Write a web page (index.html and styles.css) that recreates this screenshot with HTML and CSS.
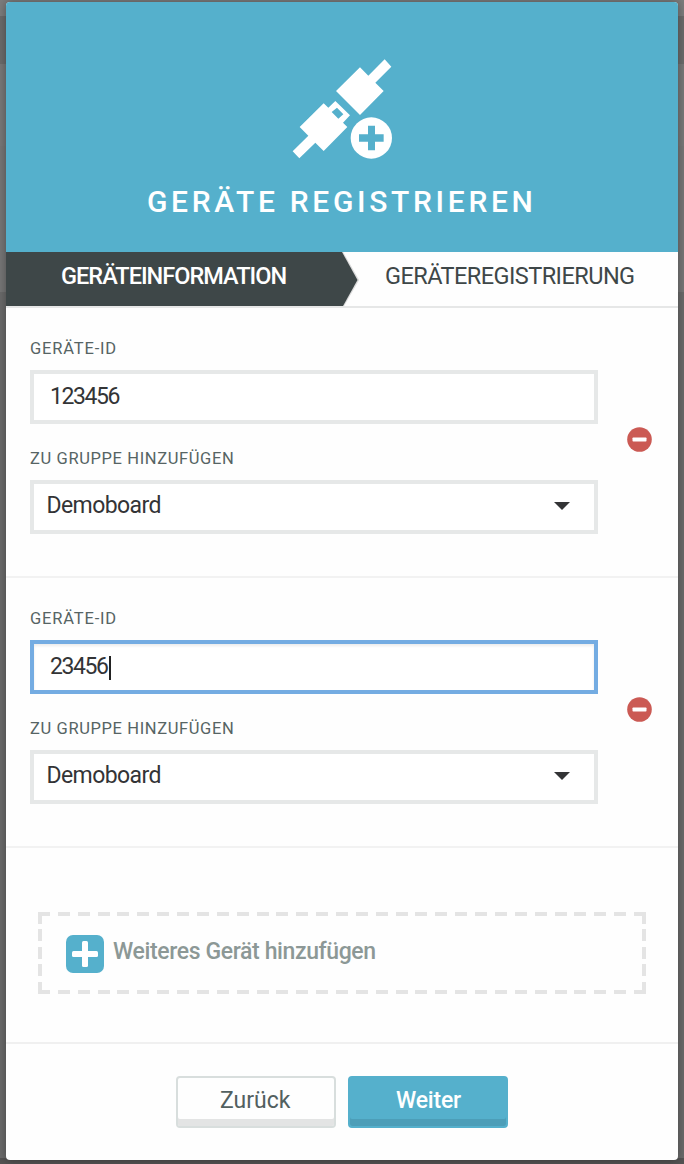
FILE: index.html
```html
<!DOCTYPE html>
<html lang="de">
<head>
<meta charset="utf-8">
<title>Geräte registrieren</title>
<link rel="stylesheet" href="styles.css">
</head>
<body>
<main class="modal">
  <header class="hero">
    <svg class="hero-icon" viewBox="66 42 300 300" aria-hidden="true">
      <g fill="#fff">
        <path d="M270 67 295 92 344 43 364 65 316 113 341 138 270 210 198 138Z"/>
        <path fill-rule="evenodd" d="M161 175 175 188 196 168 240 211 219 233 232 246 161 318 136 293 88 340 68 319 115 272 89 246ZM201 188 185 201 205 221 220 208Z"/>
        <circle cx="304" cy="279" r="62"/>
      </g>
      <path fill="#55b0cc" d="M294 242h21v26h26v22h-26v26h-21v-26h-27v-22h27z"/>
    </svg>
    <h1 class="title"><span>GERÄTE REGISTRIEREN</span></h1>
  </header>
  <nav class="steps">
    <div class="step step-active"><span class="t-info">GERÄTEINFORMATION</span></div>
    <svg class="step-arrow" viewBox="0 0 18 54" aria-hidden="true"><path d="M0 0 16 28 1 54" fill="none" stroke="#ddd" stroke-width="2"/><path d="M0 0 15.5 28 1 54H0Z" fill="#3e4748"/></svg>
    <div class="step step-next"><span class="t-reg">GERÄTEREGISTRIERUNG</span></div>
  </nav>

  <section class="device">
    <div class="fields">
      <label class="label"><span class="t-id">GERÄTE-ID</span></label>
      <div class="control"><span class="t-num">123456</span></div>
      <label class="label"><span class="t-group">ZU GRUPPE HINZUFÜGEN</span></label>
      <div class="control select"><span class="t-demo">Demoboard</span><svg class="caret" viewBox="0 0 16 8"><path d="M0 0h16L8 8z" fill="#333436"/></svg></div>
    </div>
    <svg class="remove" viewBox="0 0 25 25"><circle cx="12.5" cy="12.5" r="12.3" fill="#cb5a54"/><rect x="5.5" y="10.5" width="14" height="4" rx=".7" fill="#fff"/></svg>
  </section>

  <section class="device">
    <div class="fields">
      <label class="label"><span class="t-id">GERÄTE-ID</span></label>
      <div class="control focused"><span class="t-num">23456</span><i class="cursor"></i></div>
      <label class="label"><span class="t-group">ZU GRUPPE HINZUFÜGEN</span></label>
      <div class="control select"><span class="t-demo">Demoboard</span><svg class="caret" viewBox="0 0 16 8"><path d="M0 0h16L8 8z" fill="#333436"/></svg></div>
    </div>
    <svg class="remove" viewBox="0 0 25 25"><circle cx="12.5" cy="12.5" r="12.3" fill="#cb5a54"/><rect x="5.5" y="10.5" width="14" height="4" rx=".7" fill="#fff"/></svg>
  </section>

  <section class="more">
    <div class="add">
      <svg class="add-icon" viewBox="0 0 38 38"><rect width="38" height="38" rx="7" fill="#55b0cc"/><rect x="16" y="6" width="6" height="26" rx="1.5" fill="#fff"/><rect x="6" y="16" width="26" height="6" rx="1.5" fill="#fff"/></svg>
      <span class="t-add">Weiteres Gerät hinzufügen</span>
    </div>
  </section>

  <footer class="actions">
    <div class="btn btn-back"><span class="t-back">Zurück</span></div>
    <div class="btn btn-next"><span class="t-next">Weiter</span></div>
  </footer>
</main>
</body>
</html>
```
FILE: styles.css
```css
* { box-sizing: border-box; }
body {
  margin: 0;
  height: 1164px;
  padding: 2px 6px 4px;
  overflow: hidden;
  background: linear-gradient(#7c7c7c 0 16px, #6b6b6b 16px 64px, #787878 64px 146px, #767676 146px 292px, #6a6a6a 292px 1158px, #545353 1158px);
  font-family: Roboto, "Liberation Sans", sans-serif;
  color: #333436;
}
.modal {
  height: 1158px;
  border-radius: 4px;
  background: #fefefe;
  overflow: hidden;
  box-shadow: 0 0 10px rgba(0, 0, 0, .35);
}
.hero {
  height: 250px;
  padding-top: 57px;
  background: #55b0cc;
  display: flex;
  flex-direction: column;
  align-items: center;
}
.hero-icon { width: 100px; height: 100px; }
.title {
  margin: 24px 0 0;
  width: 390px;
  font-size: 30px;
  line-height: 38px;
  font-weight: 500;
  color: #fff;
  white-space: nowrap;
  letter-spacing: 3.680px;
}
.steps {
  height: 56px;
  display: flex;
  border-bottom: 2px solid #e6e7e7;
  font-size: 23.500px;
  line-height: 48px;
  white-space: nowrap;
}
.step-active { width: 336px; padding-left: 55px; background: #3e4748; color: #fff; font-weight: 500; }
.step-arrow { width: 18px; height: 54px; }
.step-next { padding-left: 25px; color: #3e4748; }
.t-info { letter-spacing: -.98px; }
.t-reg { letter-spacing: -.55px; }
.device {
  height: 270px;
  padding: 31px 26px 0 24px;
  border-bottom: 2px solid #f2f2f2;
  display: flex;
  justify-content: space-between;
}
.fields { width: 568px; }
.label {
  display: block;
  height: 31px;
  font-size: 16.500px;
  line-height: 20px;
  color: #566464;
  white-space: nowrap;
}
.control + .label { height: 31px; }
.t-id { letter-spacing: .82px; }
.t-group { letter-spacing: .62px; }
.control {
  height: 54px;
  margin-bottom: 25px;
  border: 4px solid #e6e8e8;
  background: #fff;
  padding: 0 24px 0 16px;
  display: flex;
  align-items: flex-start;
  font-size: 23px;
  line-height: 45px;
}
.select { padding-left: 12.500px; justify-content: space-between; line-height: 43px; }
.focused { border-color: #74ace2; box-shadow: inset 0 2px 3px rgba(0, 0, 0, .08); }
.cursor { width: 2px; height: 24px; margin-top: 12px; background: #222; }
.caret { width: 16px; height: 8px; margin-top: 18px; }
.remove { width: 25px; height: 25px; margin-top: 88px; }
.t-num { letter-spacing: -1.420px; margin-right: 1px; }
.t-demo { letter-spacing: -.6px; }
.more { height: 196px; padding: 64px 32px 0; border-bottom: 2px solid #f0f0f0; }
.add {
  height: 82px;
  padding: 23px 28px;
  display: flex;
  gap: 9px;
  font-size: 23px;
  line-height: 33px;
  color: #8c9896;
  font-weight: 500;
  background:
    repeating-linear-gradient(90deg, #e4e4e4 0 12px, transparent 12px 19.867px) top / 100% 4px no-repeat,
    repeating-linear-gradient(90deg, #e4e4e4 0 12px, transparent 12px 19.867px) bottom / 100% 4px no-repeat,
    repeating-linear-gradient(#e4e4e4 0 12px, transparent 12px 17.500px) left / 4px 100% no-repeat,
    repeating-linear-gradient(#e4e4e4 0 12px, transparent 12px 17.500px) right / 4px 100% no-repeat;
}
.add-icon { width: 38px; height: 38px; flex: none; }
.t-add { white-space: nowrap; letter-spacing: -.38px; }
.actions { padding-top: 32px; display: flex; justify-content: center; gap: 12px; }
.btn {
  width: 160px;
  height: 52px;
  border: 2px solid #d8dedd;
  border-radius: 4px;
  box-shadow: inset 0 -7px #e3e4e4;
  font-size: 23px;
  line-height: 46px;
  font-weight: 500;
}
.btn-back { padding-left: 42px; color: #526060; font-weight: 400; }
.btn-next { padding-left: 46px; border-color: #55b0cc; background: #55b0cc; box-shadow: inset 0 -7px #4c9eb8; color: #fff; }
.t-next { letter-spacing: -.2px; }
```
